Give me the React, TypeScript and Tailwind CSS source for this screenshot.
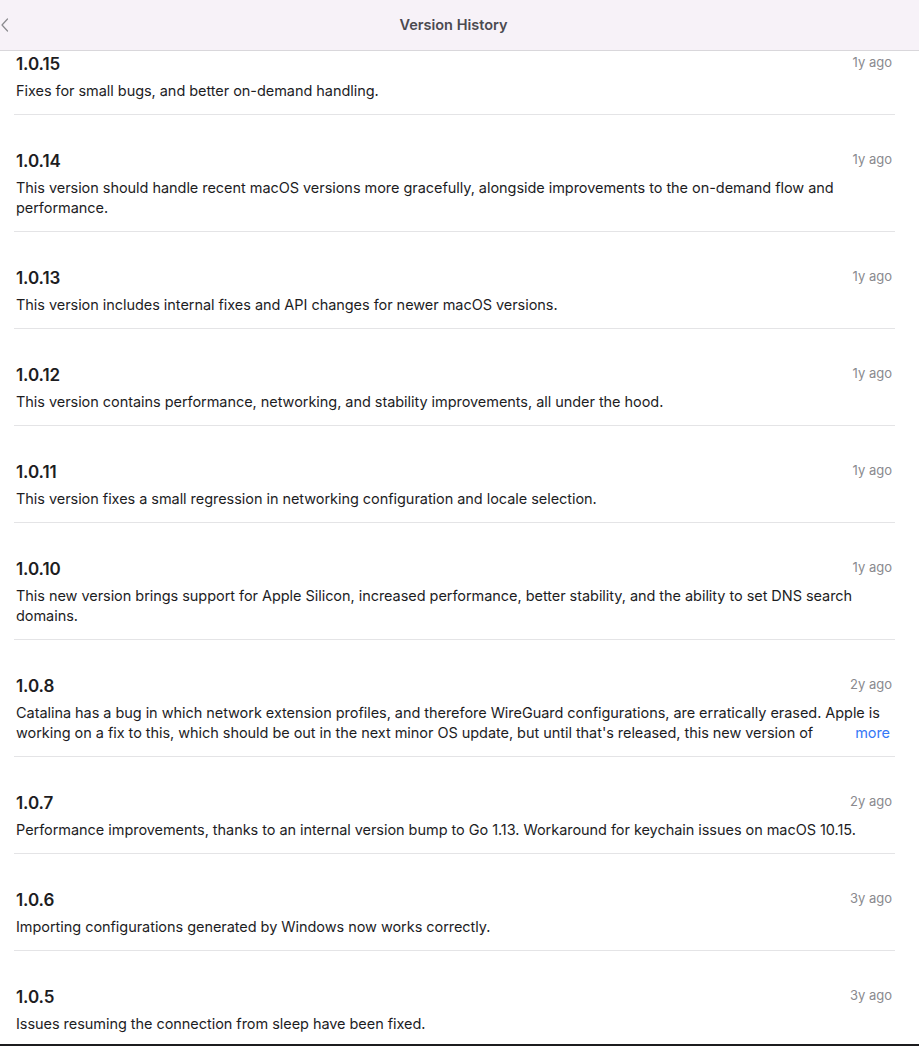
interface Release {
    version: string;
    age: string;
    notes: string;
    // shown cut off after two lines, with a "more" link on the last one
    preview?: [string, string];
}

const releases: Release[] = [
    { version: '1.0.15', age: '1y ago', notes: 'Fixes for small bugs, and better on-demand handling.' },
    {
        version: '1.0.14',
        age: '1y ago',
        notes: 'This version should handle recent macOS versions more gracefully, alongside improvements to the on-demand flow and performance.',
    },
    { version: '1.0.13', age: '1y ago', notes: 'This version includes internal fixes and API changes for newer macOS versions.' },
    { version: '1.0.12', age: '1y ago', notes: 'This version contains performance, networking, and stability improvements, all under the hood.' },
    { version: '1.0.11', age: '1y ago', notes: 'This version fixes a small regression in networking configuration and locale selection.' },
    {
        version: '1.0.10',
        age: '1y ago',
        notes: 'This new version brings support for Apple Silicon, increased performance, better stability, and the ability to set DNS search domains.',
    },
    {
        version: '1.0.8',
        age: '2y ago',
        notes: '',
        preview: [
            'Catalina has a bug in which network extension profiles, and therefore WireGuard configurations, are erratically erased. Apple is',
            "working on a fix to this, which should be out in the next minor OS update, but until that's released, this new version of",
        ],
    },
    { version: '1.0.7', age: '2y ago', notes: 'Performance improvements, thanks to an internal version bump to Go 1.13. Workaround for keychain issues on macOS 10.15.' },
    { version: '1.0.6', age: '3y ago', notes: 'Importing configurations generated by Windows now works correctly.' },
    { version: '1.0.5', age: '3y ago', notes: 'Issues resuming the connection from sleep have been fixed.' },
];

export default function App() {
    return (
        <div className="h-[1046px] flex flex-col overflow-hidden bg-white font-['Inter',_'Noto_Sans',_sans-serif] text-[#1d1d1f]">
            <header className="relative h-[51px] shrink-0 flex items-center justify-center pr-[12px] bg-[#f7f2f8] border-b border-[#d9d7db]">
                <button className="absolute left-0 top-[17px] w-[10px] h-[16px] flex items-center justify-center text-[#8a8a8e]">
                    <svg width="8" height="14" viewBox="0 0 8 14" fill="none" stroke="currentColor" strokeWidth={1.2} strokeLinecap="round" strokeLinejoin="round">
                        <path d="M6.5 1 1 7l5.5 6" />
                    </svg>
                </button>
                <h1 className="text-[14.5px] font-semibold text-[#4b4a50]">Version History</h1>
            </header>

            <div className="flex-1 overflow-hidden pl-[14px] pr-[24px]">
                {releases.map((r, i) => (
                    <div
                        key={r.version}
                        className={`pl-[2px] pr-[3px] pb-[13px] ${i === 0 ? 'pt-[2px]' : 'pt-[35px]'} ${i < releases.length - 1 ? 'border-b border-[#e4e4e6]' : ''}`}
                    >
                        <div className="flex items-start justify-between">
                            <span className="text-[17px] leading-[22px] font-semibold tracking-[-0.1px]">{r.version}</span>
                            <span className="text-[13px] leading-[18px] text-[#8a8a8e]">{r.age}</span>
                        </div>
                        {r.preview ? (
                            <div className="mt-[6px] text-[14.5px] leading-5 tracking-[-0.05px]">
                                <p className="whitespace-nowrap">{r.preview[0]}</p>
                                <div className="flex justify-between">
                                    <span className="whitespace-nowrap">{r.preview[1]}</span>
                                    <button className="pr-[2px] text-[#3478f6]">more</button>
                                </div>
                            </div>
                        ) : (
                            <p className="mt-[6px] text-[14.5px] leading-5 tracking-[-0.05px]">{r.notes}</p>
                        )}
                    </div>
                ))}
            </div>
            <div className="h-[2px] shrink-0 bg-[#1c1c1e]" />
        </div>
    );
}
